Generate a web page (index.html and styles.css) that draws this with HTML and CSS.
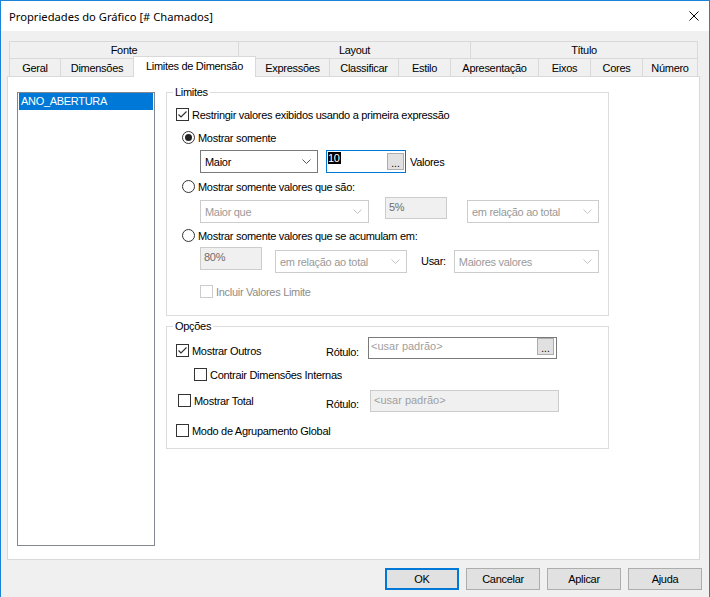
FILE: index.html
```html
<!DOCTYPE html>
<html lang="pt">
<head>
<meta charset="utf-8">
<title>Propriedades do Gráfico</title>
<link rel="stylesheet" href="styles.css">
</head>
<body>
<div class="window">
  <div class="titlebar">
    <span class="title">Propriedades do Gráfico [# Chamados]</span>
    <svg class="close" width="10" height="10" viewBox="0 0 10 10"><path d="M0.5 0.5 L9.5 9.5 M9.5 0.5 L0.5 9.5" stroke="#000" stroke-width="1" fill="none"/></svg>
  </div>
  <div class="client">
    <div class="tabs">
      <div class="tabrow back">
        <div class="tab first t-fonte">Fonte</div>
        <div class="tab t-layout">Layout</div>
        <div class="tab t-titulo">Título</div>
      </div>
      <div class="tabrow front">
        <div class="tab first t-geral">Geral</div>
        <div class="tab t-dim">Dimensões</div>
        <div class="tab active t-lim">Limites de Dimensão</div>
        <div class="tab t-expr">Expressões</div>
        <div class="tab t-class">Classificar</div>
        <div class="tab t-estilo">Estilo</div>
        <div class="tab t-apres">Apresentação</div>
        <div class="tab t-eixos">Eixos</div>
        <div class="tab t-cores">Cores</div>
        <div class="tab t-num">Número</div>
      </div>
    </div>
    <div class="panel">
      <div class="listbox">
        <div class="item sel">ANO_ABERTURA</div>
      </div>
      <div class="groups">
        <div class="group limites">
          <span class="legend">Limites</span>
          <div class="cb r-restr">
            <span class="box"><svg width="11" height="11" viewBox="0 0 11 11"><polyline points="1.5,5.5 4,8 9.5,2.5" fill="none" stroke="#333" stroke-width="1.2"/></svg></span>
            <span>Restringir valores exibidos usando a primeira expressão</span>
          </div>
          <div class="rb r-radio1">
            <span class="circle on"></span><span>Mostrar somente</span>
          </div>
          <div class="ctrlrow r-show">
            <div class="combo w-maior"><span>Maior</span><svg class="chev" width="9" height="5" viewBox="0 0 9 5"><polyline points="0.5,0.5 4.5,4.5 8.5,0.5" fill="none" stroke="#555" stroke-width="1"/></svg></div>
            <div class="textbox focus w-ten"><span class="selected">10</span><span class="dots">...</span></div>
            <span class="lbl">Valores</span>
          </div>
          <div class="rb r-radio2">
            <span class="circle"></span><span>Mostrar somente valores que são:</span>
          </div>
          <div class="ctrlrow r-vals">
            <div class="combo disabled w-maiorque"><span>Maior que</span><svg class="chev" width="9" height="5" viewBox="0 0 9 5"><polyline points="0.5,0.5 4.5,4.5 8.5,0.5" fill="none" stroke="#c4c4c4" stroke-width="1"/></svg></div>
            <div class="textbox disabled w-pct">5%</div>
            <div class="combo disabled w-rel1"><span>em relação ao total</span><svg class="chev" width="9" height="5" viewBox="0 0 9 5"><polyline points="0.5,0.5 4.5,4.5 8.5,0.5" fill="none" stroke="#c4c4c4" stroke-width="1"/></svg></div>
          </div>
          <div class="rb r-radio3">
            <span class="circle"></span><span>Mostrar somente valores que se acumulam em:</span>
          </div>
          <div class="ctrlrow r-acc">
            <div class="textbox disabled w-pct2">80%</div>
            <div class="combo disabled w-rel2"><span>em relação ao total</span><svg class="chev" width="9" height="5" viewBox="0 0 9 5"><polyline points="0.5,0.5 4.5,4.5 8.5,0.5" fill="none" stroke="#c4c4c4" stroke-width="1"/></svg></div>
            <span class="lbl usar">Usar:</span>
            <div class="combo disabled w-maiores"><span>Maiores valores</span><svg class="chev" width="9" height="5" viewBox="0 0 9 5"><polyline points="0.5,0.5 4.5,4.5 8.5,0.5" fill="none" stroke="#c4c4c4" stroke-width="1"/></svg></div>
          </div>
          <div class="cb disabled r-incl">
            <span class="box"></span><span>Incluir Valores Limite</span>
          </div>
        </div>
        <div class="group opcoes">
          <span class="legend">Opções</span>
          <div class="optrow r-outros">
            <div class="cb c-outros">
              <span class="box"><svg width="11" height="11" viewBox="0 0 11 11"><polyline points="1.5,5.5 4,8 9.5,2.5" fill="none" stroke="#333" stroke-width="1.2"/></svg></span>
              <span>Mostrar Outros</span>
            </div>
            <span class="rotulo r1">Rótulo:</span>
            <div class="textbox dark w-rot"><span class="ph">&lt;usar padrão&gt;</span><span class="dots">...</span></div>
          </div>
          <div class="cb r-contrair">
            <span class="box"></span><span>Contrair Dimensões Internas</span>
          </div>
          <div class="optrow r-total">
            <div class="cb c-total">
              <span class="box"></span><span>Mostrar Total</span>
            </div>
            <span class="rotulo r2">Rótulo:</span>
            <div class="textbox disabled w-rot2"><span class="ph">&lt;usar padrão&gt;</span></div>
          </div>
          <div class="cb r-modo">
            <span class="box"></span><span>Modo de Agrupamento Global</span>
          </div>
        </div>
      </div>
    </div>
    <div class="buttons">
      <div class="btn default">OK</div>
      <div class="btn">Cancelar</div>
      <div class="btn">Aplicar</div>
      <div class="btn">Ajuda</div>
    </div>
  </div>
</div>
</body>
</html>
```
FILE: styles.css
```css
* { box-sizing: border-box; }
html, body { margin: 0; padding: 0; }
body {
  width: 710px;
  height: 597px;
  overflow: hidden;
  font-family: "Liberation Sans", Arial, sans-serif;
  font-size: 11px;
  letter-spacing: -0.3px;
  color: #000;
  background: #f0f0f0;
}
.window {
  width: 710px;
  height: 597px;
  border: 1px solid #1c84d8;
  border-bottom: none;
  background: #f0f0f0;
  display: flex;
  flex-direction: column;
}
.titlebar {
  height: 30px;
  flex: none;
  background: #fff;
  display: flex;
  align-items: center;
  justify-content: space-between;
  padding: 0 10px 0 8px;
}
.title {
  font-family: "Noto Sans", sans-serif;
  font-size: 11.2px;
  letter-spacing: 0;
  color: #000;
}
.close { display: block; margin-top: -1px; }

.client { flex: 1; padding: 10px 0 0 6px; }
.tabs { margin-left: 2px; width: 689px; }
.tabrow { display: flex; }
.tabrow.back { height: 17px; }
.tabrow.front { height: 18px; }
.tab {
  height: 100%;
  border-top: 1px solid #d9d9d9;
  border-right: 1px solid #d9d9d9;
  background: #f0f0f0;
  display: flex;
  align-items: center;
  justify-content: center;
  white-space: nowrap;
  flex: none;
}
.tab.first { border-left: 1px solid #d9d9d9; }
.tab.active {
  height: 21px;
  margin-top: -2px;
  margin-left: -1px;
  border-left: 1px solid #d9d9d9;
  background: #fff;
  position: relative;
  z-index: 1;
  padding-bottom: 2px;
}
.t-fonte { width: 230px; }
.t-layout { width: 232px; }
.t-titulo { width: 227px; }
.t-geral { width: 52px; }
.t-dim { width: 73px; }
.t-lim { width: 123px; }
.t-expr { width: 74px; }
.t-class { width: 69px; }
.t-estilo { width: 52px; }
.t-apres { width: 88px; }
.t-eixos { width: 52px; }
.t-cores { width: 52px; }
.t-num { width: 55px; }

.panel {
  width: 693px;
  height: 484px;
  border: 1px solid #d9d9d9;
  background: #fff;
  display: flex;
  align-items: flex-start;
  padding: 15px 0 0 9px;
}
.listbox {
  width: 138px;
  height: 454px;
  border: 1px solid #828790;
  padding: 0 1px;
  flex: none;
}
.item { height: 17px; line-height: 17px; padding-left: 2px; white-space: nowrap; }
.item.sel { background: #0078d7; color: #fff; }

.groups {
  margin-left: 11px;
  display: flex;
  flex-direction: column;
  gap: 10px;
}
.group {
  width: 443px;
  border: 1px solid #dcdcdc;
  padding: 0 0 0 9px;
  display: flex;
  flex-direction: column;
  align-items: flex-start;
}
.limites { padding-bottom: 15px; }
.opcoes { padding-bottom: 9px; }
.legend {
  display: block;
  height: 14px;
  line-height: 14px;
  margin: -8px 0 0 -3px;
  padding: 0 2px;
  background: #fff;
}

.cb, .rb { display: flex; align-items: center; height: 17px; white-space: nowrap; }
.box {
  width: 13px;
  height: 13px;
  border: 1px solid #333;
  background: #fff;
  margin-right: 3px;
  flex: none;
  display: flex;
}
.box svg { display: block; }
.cb.disabled { color: #8d8d8d; }
.cb.disabled .box { border-color: #cccccc; }
.circle {
  width: 13px;
  height: 13px;
  border: 1px solid #333;
  border-radius: 50%;
  background: #fff;
  margin-right: 3px;
  flex: none;
  display: flex;
  align-items: center;
  justify-content: center;
}
.circle.on::after {
  content: "";
  width: 7px;
  height: 7px;
  border-radius: 50%;
  background: #222;
}

.r-restr { margin-top: 7px; }
.r-radio1 { margin-top: 6px; margin-left: 6px; }
.r-show { margin-top: 4px; height: 24px; }
.r-radio2 { margin-top: 4px; margin-left: 6px; }
.r-vals { margin-top: 2px; height: 26px; }
.r-radio3 { margin-top: 4px; margin-left: 6px; }
.r-acc { margin-top: 3px; height: 26px; }
.r-incl { margin-top: 10px; margin-left: 24px; }

.ctrlrow { display: flex; align-items: flex-start; margin-left: 24px; }
.combo {
  height: 23px;
  border: 1px solid #7a7a7a;
  background: #fff;
  display: flex;
  align-items: center;
  justify-content: space-between;
  padding: 0 6px 0 4px;
  white-space: nowrap;
  flex: none;
}
.combo.disabled { border-color: #cccccc; color: #9a9a9a; align-self: flex-end; }
.chev { display: block; flex: none; }
.textbox {
  height: 23px;
  border: 1px solid #cccccc;
  background: #fff;
  display: flex;
  align-items: flex-start;
  justify-content: space-between;
  flex: none;
  white-space: nowrap;
}
.textbox.focus { border-color: #0078d7; padding: 1px 1px 0 1px; }
.textbox.disabled { background: #f0f0f0; color: #6d6d6d; padding: 2px 3px; line-height: 14px; }
.textbox.dark { border-color: #7a7a7a; padding: 0 2px 0 2px; height: 22px; }
.selected { background: #000; color: #fff; line-height: 12px; height: 12px; padding: 0 1px 0 0; }
.dots {
  width: 17px;
  height: 17px;
  margin-top: 1px;
  background: #e1e1e1;
  border: 1px solid #adadad;
  display: flex;
  align-items: flex-end;
  justify-content: center;
  line-height: 11px;
  letter-spacing: 0;
  font-size: 10px;
  color: #000;
  flex: none;
}
.lbl { align-self: center; }
.w-maior { width: 118px; }
.w-ten { width: 80px; margin-left: 8px; }
.r-show .lbl { margin-left: 4px; }
.w-maiorque { width: 169px; }
.w-pct { width: 62px; height: 22px; margin-left: 16px; }
.w-rel1 { width: 132px; margin-left: 20px; }
.w-pct2 { width: 62px; }
.w-rel2 { width: 132px; margin-left: 13px; }
.usar { align-self: flex-end; line-height: 23px; margin-left: 14px; }
.w-maiores { width: 145px; margin-left: 8px; }

.optrow { display: flex; align-items: flex-start; height: 22px; }
.r-outros { margin-top: 4px; }
.c-outros { width: 150px; margin-top: 5px; }
.rotulo { height: 17px; line-height: 17px; }
.r1 { width: 42px; margin-top: 7px; }
.w-rot { width: 189px; }
.ph { color: #a0a0a0; line-height: 14px; letter-spacing: 0; }
.w-rot .dots { margin-top: 0; }
.w-rot .ph { margin-top: 1px; }
.r-contrair { margin-top: 7px; margin-left: 18px; }
.r-total { margin-top: 7px; }
.c-total { width: 148px; margin-left: 2px; margin-top: 2px; }
.r2 { width: 44px; margin-top: 6px; }
.w-rot2 { width: 189px; height: 22px; }
.r-modo { margin-top: 10px; }

.buttons {
  display: flex;
  justify-content: flex-end;
  gap: 7px;
  margin-top: 8px;
  padding-right: 7px;
}
.btn {
  width: 74px;
  height: 22px;
  background: #e1e1e1;
  border: 1px solid #adadad;
  display: flex;
  align-items: center;
  justify-content: center;
}
.btn.default { border: 2px solid #0078d7; }
```
